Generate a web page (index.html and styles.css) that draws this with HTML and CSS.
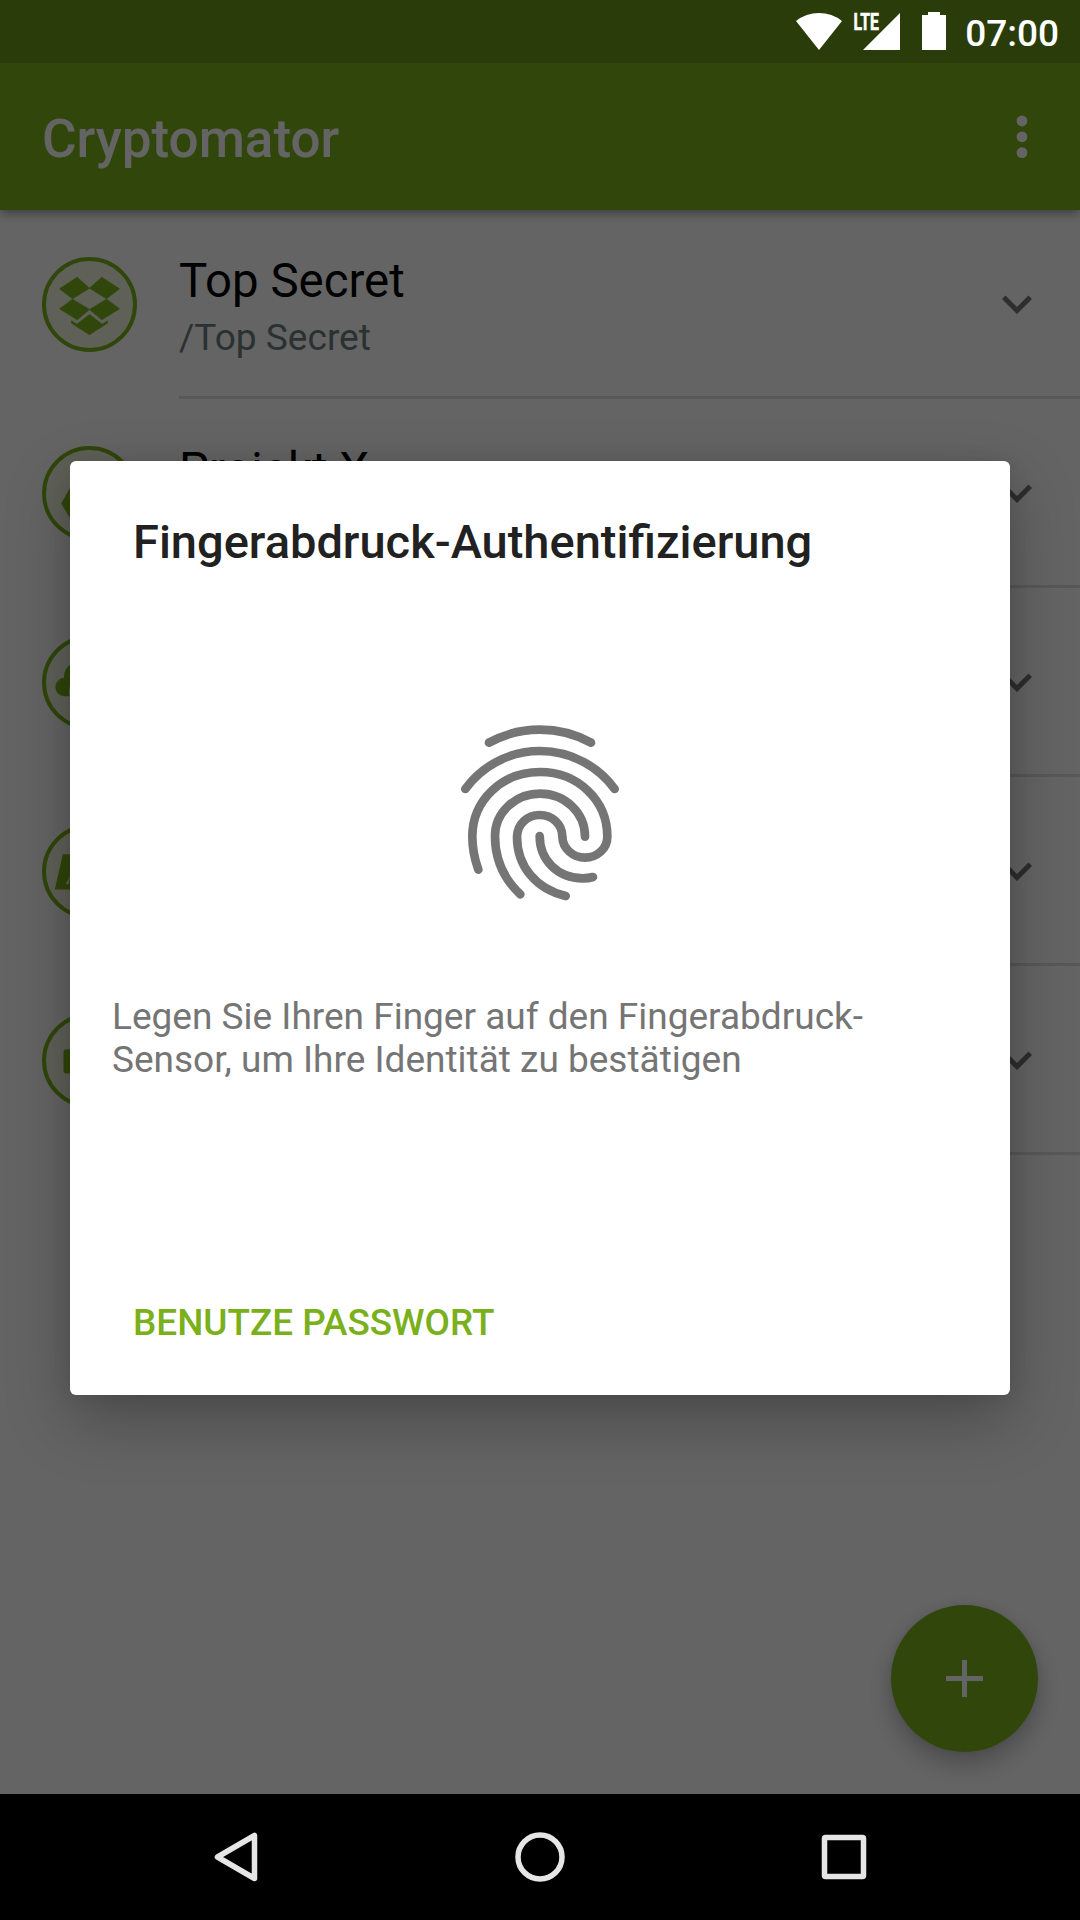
FILE: index.html
```html
<!DOCTYPE html>
<html lang="de">
<head>
<meta charset="utf-8">
<title>Cryptomator</title>
<link rel="stylesheet" href="styles.css">
</head>
<body>
<svg width="0" height="0" class="defs">
  <symbol id="chevron" viewBox="0 0 24 24"><path d="M16.59 8.59 12 13.17 7.41 8.59 6 10l6 6 6-6z"/></symbol>
</svg>
<div class="phone">
  <div class="app">
    <div class="status-back"></div>
    <header class="toolbar">
      <h1 class="toolbar-title">Cryptomator</h1>
      <svg class="more" viewBox="0 0 12 44"><circle cx="6" cy="6" r="5.4"/><circle cx="6" cy="21.8" r="5.4"/><circle cx="6" cy="37.6" r="5.4"/></svg>
    </header>
    <main class="vaults">
      <div class="vault">
        <svg class="vault-icon" viewBox="-142.5 -142.5 285 285">
          <circle class="ring" r="136.5"/>
          <path class="glyph" d="M-90-47-37-82 0-49-51-17ZM90-47 37-82 0-49 51-17ZM-90 13-51-16 0 15-37 46ZM90 13 51-16 0 15 37 46ZM0 30 38 59 54 49V56L0 91-54 56V49L-38 59Z"/>
        </svg>
        <div class="vault-body">
          <div class="vault-text"><div class="vault-name">Top Secret</div><div class="vault-path">/Top Secret</div></div>
          <svg class="chevron"><use href="#chevron"/></svg>
        </div>
      </div>
      <div class="vault">
        <svg class="vault-icon" viewBox="-142.5 -142.5 285 285">
          <circle class="ring" r="136.5"/>
          <path d="M-85 30-30-67H28L82 30 54 78H-56Z"/>
        </svg>
        <div class="vault-body">
          <div class="vault-text"><div class="vault-name">Projekt X</div></div>
          <svg class="chevron"><use href="#chevron"/></svg>
        </div>
      </div>
      <div class="vault">
        <svg class="vault-icon" viewBox="-142.5 -142.5 285 285">
          <circle class="ring" r="136.5"/>
          <path d="M-60 41H-74A27.500 27.500 0 0 1-76-14C-77-36-68-50-50-58V-5C-58 5-64 20-60 41Z"/>
          <path d="M-30 50A30 30 0 0 1-28-10C-20-50 40-50 50-10A30 30 0 0 1 80 50Z"/>
        </svg>
        <div class="vault-body">
          <div class="vault-text"></div>
          <svg class="chevron"><use href="#chevron"/></svg>
        </div>
      </div>
      <div class="vault">
        <svg class="vault-icon" viewBox="-142.5 -142.5 285 285">
          <circle class="ring" r="136.5"/>
          <path d="M-80-52H60L80 54H-50L-57 62-61 54H-104ZM-58 12-71 38H-63Z" fill-rule="evenodd"/>
        </svg>
        <div class="vault-body">
          <div class="vault-text"></div>
          <svg class="chevron"><use href="#chevron"/></svg>
        </div>
      </div>
      <div class="vault">
        <svg class="vault-icon" viewBox="-142.5 -142.5 285 285">
          <circle class="ring" r="136.5"/>
          <rect x="-78" y="-34" width="156" height="73" rx="10"/>
        </svg>
        <div class="vault-body">
          <div class="vault-text"></div>
          <svg class="chevron"><use href="#chevron"/></svg>
        </div>
      </div>
    </main>
    <div class="fab"><svg viewBox="0 0 37 37"><path d="M16 0h5v16h16v5H21v16h-5V21H0v-5h16z"/></svg></div>
  </div>

  <div class="scrim">
    <section class="dialog">
      <h2 class="dialog-title">Fingerabdruck-Authentifizierung</h2>
      <svg class="fingerprint" viewBox="0 0 600 660">
        <path d="M147 128A320 320 0 0 1 453 128"/>
        <path d="M76 267A277 277 0 0 1 524 267"/>
        <path d="M115 509C103 475 97 445 97 410C97 300 187 216 300 216S502 300 502 410C502 446 471 473 435 473S368 446 367 410C367 372 336 345 299 345S232 372 231 410C231 500 290 568 377 588"/>
        <path d="M241 583C195 540 165 480 165 408C165 338 225 281 300 281S435 338 435 410"/>
        <path d="M299 408C299 480 353 535 428 535Q446 535 459 531"/>
      </svg>
      <p class="dialog-message">Legen Sie Ihren Finger auf den Fingerabdruck-<br>Sensor, um Ihre Identität zu bestätigen</p>
      <div class="dialog-action">BENUTZE PASSWORT</div>
    </section>
  </div>

  <div class="status">
    <svg class="wifi" viewBox="0 0 46 37"><path d="M23 37 0 8Q10 0 23 0T46 8Z"/></svg>
    <svg class="signal" viewBox="0 0 46 37"><path d="M46 0V37H9Z"/><text x="-0.500" y="16.800" textLength="25.500" lengthAdjust="spacingAndGlyphs">LTE</text></svg>
    <svg class="battery" viewBox="0 0 24 38"><path d="M6 0H18V3H24V38H0V3H6Z"/></svg>
    <span class="clock">07:00</span>
  </div>

  <nav class="navbar">
    <svg viewBox="0 0 60 60"><path d="M48.5 8.5V51.500L11.500 30Z"/></svg>
    <svg viewBox="0 0 60 60"><circle cx="30" cy="30" r="22"/></svg>
    <svg viewBox="0 0 60 60"><rect x="10.500" y="10.500" width="39" height="39" rx="1"/></svg>
  </nav>
</div>
</body>
</html>
```
FILE: styles.css
```css
* { box-sizing: border-box; margin: 0; padding: 0; }

body {
  width: 1080px;
  height: 1920px;
  overflow: hidden;
  background: #000;
  font-family: Roboto, "Noto Sans", sans-serif;
}

svg { display: block; }
.defs { position: absolute; }

.phone {
  position: relative;
  display: flex;
  flex-direction: column;
  width: 1080px;
  height: 1920px;
}

.app {
  position: relative;
  isolation: isolate;
  flex: 1;
  display: flex;
  flex-direction: column;
  background: #fafafa;
  overflow: hidden;
}

.status-back {
  position: relative;
  z-index: 2;
  height: 63px;
  background: #68971b;
}

.toolbar {
  position: relative;
  z-index: 1;
  display: flex;
  align-items: center;
  justify-content: space-between;
  height: 147px;
  padding: 0 52px 0 42px;
  background: #79b01b;
  box-shadow: 0 3px 10px rgba(0, 0, 0, .4);
}

.toolbar-title {
  padding-top: 5px;
  color: #fafafa;
  font-size: 53px;
  font-weight: 500;
  line-height: 62px;
}

.more { width: 12px; height: 44px; fill: #fafafa; }

.vault {
  display: flex;
  height: 189px;
  padding-left: 42px;
}

.vault-icon {
  width: 95px;
  height: 95px;
  margin: 47px 42px 0 0;
  fill: #79b01b;
}

.ring { fill: #edf3df; stroke: #79b01b; stroke-width: 12; }
.glyph { stroke: #79b01b; stroke-width: 2; }

.vault-body {
  flex: 1;
  display: flex;
  justify-content: space-between;
  padding: 43px 33px 0 0;
  border-bottom: 3px solid #dcdcdc;
}

.vault-name { color: #000; font-size: 47.4px; line-height: 56px; }
.vault-path { margin-top: 7px; color: #6b7c7c; font-size: 37.1px; line-height: 44px; }

.chevron { width: 60px; height: 60px; margin-top: 21px; fill: #737373; }

.fab {
  position: absolute;
  right: 42px;
  bottom: 42px;
  display: flex;
  align-items: center;
  justify-content: center;
  width: 147px;
  height: 147px;
  border-radius: 50%;
  background: #79b01b;
  box-shadow: 0 12px 24px rgba(0, 0, 0, .25), 0 0 8px rgba(0, 0, 0, .08);
}

.fab svg { width: 37px; height: 37px; fill: #fafafa; }

.scrim {
  position: absolute;
  inset: 0 0 126px;
  display: flex;
  align-items: flex-start;
  justify-content: center;
  padding-top: 461px;
  background: rgba(0, 0, 0, .6);
}

.dialog {
  display: flex;
  flex-direction: column;
  width: 940px;
  height: 934px;
  border-radius: 6px;
  background: #fff;
  box-shadow: 0 24px 64px rgba(0, 0, 0, .27), 0 0 20px rgba(0, 0, 0, .08);
}

.dialog-title {
  padding: 53px 63px 0;
  color: #212121;
  font-size: 47px;
  font-weight: 500;
  line-height: 56px;
}

.fingerprint {
  width: 200px;
  height: 220px;
  margin: 130px auto 0;
  fill: none;
  stroke: #757575;
  stroke-width: 26;
  stroke-linecap: round;
}

.dialog-message {
  padding: 75px 42px 0;
  color: #757575;
  font-size: 37px;
  line-height: 43px;
  white-space: nowrap;
}

.dialog-action {
  margin: auto 0 0;
  padding: 0 63px 50px;
  color: #79b01b;
  font-size: 36.9px;
  font-weight: 500;
  line-height: 44px;
}

.status {
  position: absolute;
  inset: 0 0 auto;
  display: flex;
  align-items: flex-start;
  justify-content: flex-end;
  height: 63px;
  padding: 12px 21px 0 0;
  color: #fff;
  fill: #fff;
}

.wifi { width: 46px; height: 37px; margin: 1px 12px 0 0; }
.signal { width: 46px; height: 37px; margin: 1px 22px 0 0; overflow: visible; }
.signal text { font-size: 23px; font-weight: 700; stroke: #fff; stroke-width: .6; }
.battery { width: 24px; height: 38px; margin-right: 19px; }
.clock { font-size: 37px; font-weight: 500; line-height: 44px; }

.navbar {
  display: flex;
  justify-content: space-between;
  height: 126px;
  padding: 33px 206px 0;
  background: #000;
}

.navbar svg {
  width: 60px;
  height: 60px;
  fill: none;
  stroke: #e6e6e6;
  stroke-width: 5.5;
  stroke-linejoin: round;
}
```
